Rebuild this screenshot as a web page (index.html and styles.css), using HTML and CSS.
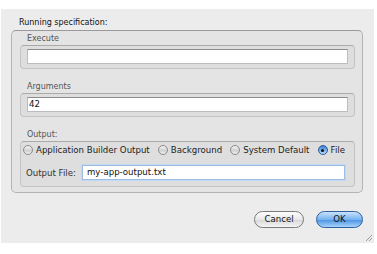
FILE: index.html
```html
<!DOCTYPE html>
<html lang="en">
<head>
    <meta charset="UTF-8">
    <title>Running specification</title>
    <link rel="stylesheet" href="styles.css">
</head>
<body>
    <div class="window">
        <div class="spec-title">Running specification:</div>
        <div class="spec-box">
            <div class="sub-label">Execute</div>
            <div class="sub-box">
                <div class="field"></div>
            </div>
            <div class="sub-label spaced">Arguments</div>
            <div class="sub-box">
                <div class="field">42</div>
            </div>
            <div class="sub-label spaced">Output:</div>
            <div class="sub-box output">
                <div class="radios">
                    <label class="radio"><span class="dot"></span>Application Builder Output</label>
                    <label class="radio"><span class="dot"></span>Background</label>
                    <label class="radio"><span class="dot"></span>System Default</label>
                    <label class="radio"><span class="dot on"></span>File</label>
                </div>
                <div class="file-row">
                    <span class="file-label">Output File:</span>
                    <div class="field focus">my-app-output.txt</div>
                </div>
            </div>
        </div>
        <div class="buttons">
            <div class="btn">Cancel</div>
            <div class="btn default">OK</div>
        </div>
        <div class="grip">
            <svg width="7" height="7" viewBox="0 0 7 7">
                <path d="M7 1 L1 7 M7 4 L4 7" stroke="#888" stroke-width="0.8" fill="none"/>
            </svg>
        </div>
    </div>
</body>
</html>
```

FILE: styles.css
```css
body {
    margin: 0;
    background: #fff;
    font-family: "DejaVu Sans", sans-serif;
    color: #222;
}
.window {
    position: relative;
    margin: 9px 0 0 1px;
    width: 373px;
    height: 234px;
    background: #ececec;
    padding: 8px 0 0 10px;
    box-sizing: border-box;
}
.spec-title {
    font-size: 8px;
    line-height: 12px;
    padding-left: 8px;
    margin-bottom: 1px;
    color: #111;
}
.spec-box {
    width: 352px;
    box-sizing: border-box;
    background: #e4e4e4;
    border: 1px solid #b4b4b4;
    border-top-color: #9a9a9a;
    border-radius: 5px;
    padding: 2px 7px 5px 8px;
}
.sub-label {
    font-size: 8px;
    line-height: 11px;
    padding-left: 7px;
    margin-bottom: 1px;
    color: #555;
}
.sub-label.spaced {
    margin-top: 12px;
}
.sub-box {
    height: 24px;
    box-sizing: border-box;
    background: #dedede;
    border: 1px solid #c4c4c4;
    border-top-color: #aaa;
    border-radius: 4px;
    padding: 3px 6px 0 6px;
}
.field {
    height: 15px;
    box-sizing: border-box;
    background: #fff;
    border: 1px solid #bcbcbc;
    border-top-color: #8c8c8c;
    font-size: 8.6px;
    line-height: 13px;
    padding-left: 1px;
    color: #111;
}
.sub-box.output {
    height: 46px;
    padding: 2px 9px 0 2px;
}
.radios {
    display: flex;
    justify-content: space-between;
    align-items: center;
    height: 12px;
}
.radio {
    display: flex;
    align-items: center;
    font-size: 8.6px;
    color: #222;
}
.dot {
    width: 10px;
    height: 10px;
    box-sizing: border-box;
    border-radius: 50%;
    border: 1px solid #8a8a8a;
    background: linear-gradient(#f4f4f4, #d0d0d0 60%, #f2f2f2);
    margin-right: 3px;
    position: relative;
}
.dot.on {
    border-color: #2d5a9c;
    background: linear-gradient(#3c7fd8, #8fc0f2 70%, #bfe0ff);
}
.dot.on::after {
    content: "";
    position: absolute;
    left: 2.5px;
    top: 2.5px;
    width: 3px;
    height: 3px;
    border-radius: 50%;
    background: #111;
}
.file-row {
    display: flex;
    align-items: center;
    margin-top: 9px;
    padding-left: 3px;
}
.file-label {
    font-size: 8.6px;
    color: #333;
    width: 56px;
}
.file-row .field {
    flex: 1;
    height: 15px;
    padding-left: 4px;
}
.field.focus {
    border: 1px solid #9cbde6;
    box-shadow: 0 0 0 1px #c3d8f2;
}
.buttons {
    display: flex;
    justify-content: flex-end;
    gap: 12px;
    width: 352px;
    margin-top: 18px;
}
.btn {
    height: 17px;
    box-sizing: border-box;
    border-radius: 9px;
    font-size: 8.6px;
    line-height: 15px;
    text-align: center;
    color: #111;
    width: 50px;
    border: 1px solid #7a7a7a;
    background: linear-gradient(#fdfdfd, #e8e8e8 50%, #d8d8d8 55%, #f6f6f6);
}
.btn.default {
    width: 47px;
    border-color: #2f5f9e;
    background: linear-gradient(#c9e3fb, #75b2ef 50%, #4f97e4 55%, #a6d3fb);
}
.grip {
    position: absolute;
    right: 2px;
    bottom: 2px;
    line-height: 0;
}
```
